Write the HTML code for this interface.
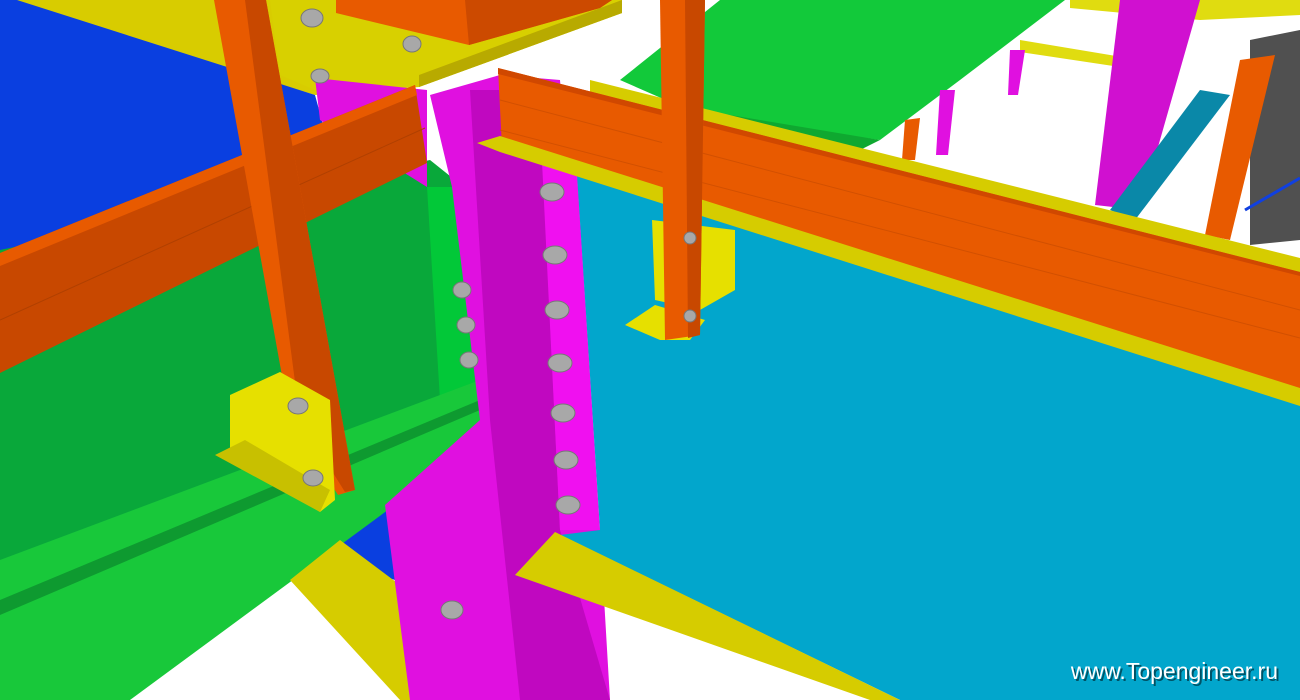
<!DOCTYPE html>
<html><head><meta charset="utf-8"><style>
html,body{margin:0;padding:0;background:#fff;width:1300px;height:700px;overflow:hidden}
svg{display:block}
</style></head><body>
<svg width="1300" height="700" viewBox="0 0 1300 700" xmlns="http://www.w3.org/2000/svg">
<rect width="1300" height="700" fill="#fff"/>
<polygon points="0,0 622,0 622,13 419,87 315,95" fill="#d8cc00"/>
<polygon points="0,0 17,0 315,95 330,150 0,260" fill="#0a3fe0"/>
<polygon points="330,500 400,480 395,580 330,560" fill="#0a3fe0"/>
<polygon points="270,0 622,0 622,13 419,87 315,90 280,75" fill="#d8d000"/>
<polygon points="419,75 622,0 622,13 419,87" fill="#b8aa00"/>
<polygon points="620,80 720,0 1065,0 960,80 880,140 700,115" fill="#12c93a"/>
<polygon points="700,110 880,140 860,150 700,125" fill="#0fa830"/>
<polygon points="1020,40 1140,60 1140,70 1020,52" fill="#e0dc10"/>
<polygon points="1070,0 1300,0 1300,15 1200,20 1070,8" fill="#e0dc10"/>
<polygon points="1120,0 1200,0 1140,210 1095,205" fill="#d010d0"/>
<polygon points="1200,90 1230,95 1135,220 1110,210" fill="#0a88a8"/>
<polygon points="1250,40 1300,30 1300,240 1250,245" fill="#505050"/>
<line x1="1245" y1="210" x2="1300" y2="178" stroke="#1040e0" stroke-width="3"/>
<polygon points="1240,60 1275,55 1230,240 1205,235" fill="#e85a00"/>
<polygon points="1010,50 1025,50 1018,95 1008,95" fill="#e010e0"/>
<polygon points="940,90 955,90 948,155 936,155" fill="#e010e0"/>
<polygon points="905,120 920,118 915,160 902,160" fill="#e85a00"/>
<polygon points="0,250 430,160 480,200 480,390 0,640" fill="#09a83a"/>
<polygon points="427,187 470,187 480,390 440,400" fill="#02c838"/>
<polygon points="0,560 480,380 510,420 130,700 0,700" fill="#18c83a"/>
<polygon points="0,600 480,400 480,410 0,615" fill="#0e9a30"/>
<polygon points="290,580 340,540 420,600 420,700 400,700" fill="#d6cc00"/>
<polygon points="315,78 427,90 427,187 320,120" fill="#e010e0"/>
<!-- left orange beam -->
<polygon points="0,253 415,85 427,163 0,373" fill="#c84800"/>
<polygon points="0,253 415,85 417,95 0,266" fill="#e85a00"/>
<line x1="0" y1="320" x2="425" y2="128" stroke="#b04000" stroke-width="1"/>
<!-- orange diagonal column -->
<polygon points="214,0 266,0 355,490 338,495 290,420" fill="#e85a00"/>
<polygon points="245,0 266,0 355,490 345,492 300,420" fill="#c84800"/>
<polygon points="230,395 280,372 330,400 335,500 320,512 230,450" fill="#e6e000"/>
<polygon points="215,455 245,440 330,490 320,512" fill="#c8c000"/>
<!-- magenta column -->
<polygon points="430,95 500,75 560,80 600,530 610,700 410,700 385,505 480,420 452,187" fill="#e010e0"/>
<polygon points="470,90 539,90 560,530 610,700 520,700 490,420" fill="#c008c0"/>
<polygon points="539,100 575,140 600,530 560,530" fill="#f010f0"/>
<polygon points="336,0 612,0 600,8 469,45 336,13" fill="#e85a00"/>
<polygon points="465,0 612,0 600,8 469,45" fill="#cc4a00"/>
<polygon points="577,175 1300,262 1300,700 900,700 560,535 600,530" fill="#02a6cc"/>
<polygon points="515,575 555,532 900,700 870,700" fill="#d6cc00"/>
<polygon points="590,80 1300,258 1300,274 590,94" fill="#d6cc00"/>
<polygon points="498,68 1300,272 1300,390 502,148" fill="#e85a00"/>
<polygon points="498,68 1300,272 1300,276 498,74" fill="#d04800"/>
<line x1="500" y1="100" x2="1300" y2="310" stroke="#d25000" stroke-width="1"/>
<line x1="500" y1="130" x2="1300" y2="338" stroke="#d25000" stroke-width="1"/>
<polygon points="477,143 500,136 1300,388 1300,406 500,152" fill="#d6cc00"/>
<polygon points="625,325 655,305 705,320 690,340 660,340" fill="#e6e000"/>
<polygon points="652,220 735,230 735,290 700,310 655,300" fill="#e6e000"/>
<polygon points="660,0 705,0 700,335 665,340" fill="#e85a00"/>
<polygon points="685,0 705,0 700,335 688,338" fill="#c84800"/>
<g fill="#a8a8a8" stroke="#777" stroke-width="1">
<ellipse cx="552" cy="192" rx="12" ry="9"/><ellipse cx="555" cy="255" rx="12" ry="9"/>
<ellipse cx="557" cy="310" rx="12" ry="9"/><ellipse cx="560" cy="363" rx="12" ry="9"/>
<ellipse cx="563" cy="413" rx="12" ry="9"/><ellipse cx="566" cy="460" rx="12" ry="9"/>
<ellipse cx="568" cy="505" rx="12" ry="9"/><ellipse cx="462" cy="290" rx="9" ry="8"/>
<ellipse cx="466" cy="325" rx="9" ry="8"/><ellipse cx="469" cy="360" rx="9" ry="8"/>
<ellipse cx="298" cy="406" rx="10" ry="8"/><ellipse cx="313" cy="478" rx="10" ry="8"/>
<ellipse cx="452" cy="610" rx="11" ry="9"/><ellipse cx="312" cy="18" rx="11" ry="9"/>
<ellipse cx="412" cy="44" rx="9" ry="8"/><ellipse cx="320" cy="76" rx="9" ry="7"/>
<ellipse cx="690" cy="238" rx="6" ry="6"/><ellipse cx="690" cy="316" rx="6" ry="6"/>
</g>
<text x="1280" y="681" text-anchor="end" font-family="Liberation Sans, sans-serif" font-size="23" fill="#000" opacity="0.5">www.Topengineer.ru</text>
<text x="1278" y="679" text-anchor="end" font-family="Liberation Sans, sans-serif" font-size="23" fill="#fff">www.Topengineer.ru</text>
</svg>
</body></html>
